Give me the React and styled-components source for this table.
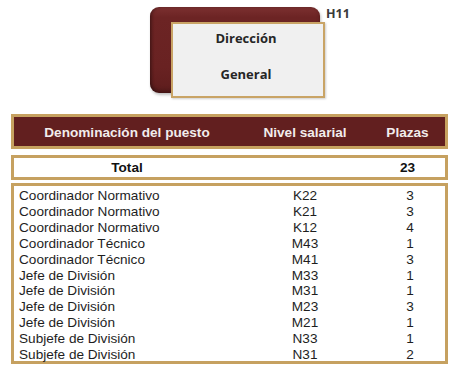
import React from "react";
import styled, {createGlobalStyle} from "styled-components";

const rows = [
  {puesto: "Coordinador Normativo", nivel: "K22", plazas: 3},
  {puesto: "Coordinador Normativo", nivel: "K21", plazas: 3},
  {puesto: "Coordinador Normativo", nivel: "K12", plazas: 4},
  {puesto: "Coordinador Técnico", nivel: "M43", plazas: 1},
  {puesto: "Coordinador Técnico", nivel: "M41", plazas: 3},
  {puesto: "Jefe de División", nivel: "M33", plazas: 1},
  {puesto: "Jefe de División", nivel: "M31", plazas: 1},
  {puesto: "Jefe de División", nivel: "M23", plazas: 3},
  {puesto: "Jefe de División", nivel: "M21", plazas: 1},
  {puesto: "Subjefe de División", nivel: "N33", plazas: 1},
  {puesto: "Subjefe de División", nivel: "N31", plazas: 2},
];

export default function App() {
  const total = rows.reduce((sum, r) => sum + r.plazas, 0);

  return (
    <>
      <GlobalStyle />
      <Page>
        <ChartArea>
          <UnitNode>
            <UnitCard>
              <UnitLabel>Dirección</UnitLabel>
              <UnitLabel>General</UnitLabel>
            </UnitCard>
          </UnitNode>
          <Code>H11</Code>
        </ChartArea>

        <Table>
          <HeaderRow>
            <Cell>Denominación del puesto</Cell>
            <Cell>Nivel salarial</Cell>
            <Cell>Plazas</Cell>
          </HeaderRow>
          <TotalRow>
            <Cell>Total</Cell>
            <Cell />
            <Cell>{total}</Cell>
          </TotalRow>
          <Body>
            {rows.map((r, i) => (
              <Row key={i}>
                <Cell $align="left">{r.puesto}</Cell>
                <Cell>{r.nivel}</Cell>
                <Cell>{r.plazas}</Cell>
              </Row>
            ))}
          </Body>
        </Table>
      </Page>
    </>
  );
}

const GlobalStyle = createGlobalStyle`
  body {
    margin: 0;
    background: #ffffff;
    font-family: "Liberation Sans", Arial, sans-serif;
  }
`;

const Page = styled.div`
  width: 459px;
  height: 371px;
  display: flex;
  flex-direction: column;
  overflow: hidden;
`;

const ChartArea = styled.div`
  height: 114px;
  display: flex;
  align-items: flex-start;
  padding: 7px 0 0 150px;
  box-sizing: border-box;
`;

const UnitNode = styled.div`
  position: relative;
  width: 170px;
  height: 86px;
  border-radius: 9px;
  background: linear-gradient(180deg, #7c3030 0%, #6c2424 12%, #692222 70%, #5e1d1d 100%);
  box-shadow: inset 2px 0 3px rgba(0, 0, 0, 0.25),
    inset 0 -3px 4px rgba(0, 0, 0, 0.22), 1px 2px 3px rgba(0, 0, 0, 0.25);
`;

/* white card sits over the lower right of the maroon node */
const UnitCard = styled.div`
  position: absolute;
  left: 21px;
  top: 15px;
  width: 154px;
  height: 76px;
  box-sizing: border-box;
  background: #f0f0f0;
  border: 2px solid #c9a466;
  box-shadow: 1px 1px 2px rgba(0, 0, 0, 0.2);
  display: flex;
  flex-direction: column;
  align-items: center;
  justify-content: flex-start;
  gap: 17px;
  padding: 5px 4px 0 0;
`;

const UnitLabel = styled.div`
  font-family: "Open Sans", "DejaVu Sans", sans-serif;
  font-weight: 700;
  font-size: 13px;
  line-height: 19px;
  color: #262626;
`;

const Code = styled.div`
  font-family: "Open Sans", "DejaVu Sans", sans-serif;
  font-weight: 700;
  font-size: 12.5px;
  line-height: 14px;
  color: #3a3a3a;
  margin: 0 0 0 6px;
`;

const Table = styled.div`
  margin: 0 11px;
  display: flex;
  flex-direction: column;
`;

const Grid = styled.div`
  display: grid;
  grid-template-columns: 226px 130px 1fr;
  align-items: center;
`;

const Cell = styled.div`
  text-align: ${(p) => p.$align || "center"};
  white-space: nowrap;
`;

const HeaderRow = styled(Grid)`
  height: 35px;
  box-sizing: border-box;
  border: 3px solid #c6a160;
  background: #621f1f;
  color: #f2ecec;
  font-weight: 700;
  font-size: 13.6px;
  padding-top: 1px;
`;

const TotalRow = styled(Grid)`
  margin-top: 6px;
  height: 25px;
  box-sizing: border-box;
  border: 3px solid #c6a160;
  font-weight: 700;
  font-size: 13.6px;
  color: #111;
`;

const Body = styled.div`
  margin-top: 3px;
  border: 3px solid #c6a160;
  padding: 2px 0 3px;
  height: 181px;
  box-sizing: border-box;
`;

const Row = styled(Grid)`
  height: 15.85px;
  font-size: 13.6px;
  color: #1e1e1e;
  grid-template-columns: 216px 140px 1fr;
  padding-left: 5px;
  line-height: 15px;
`;
